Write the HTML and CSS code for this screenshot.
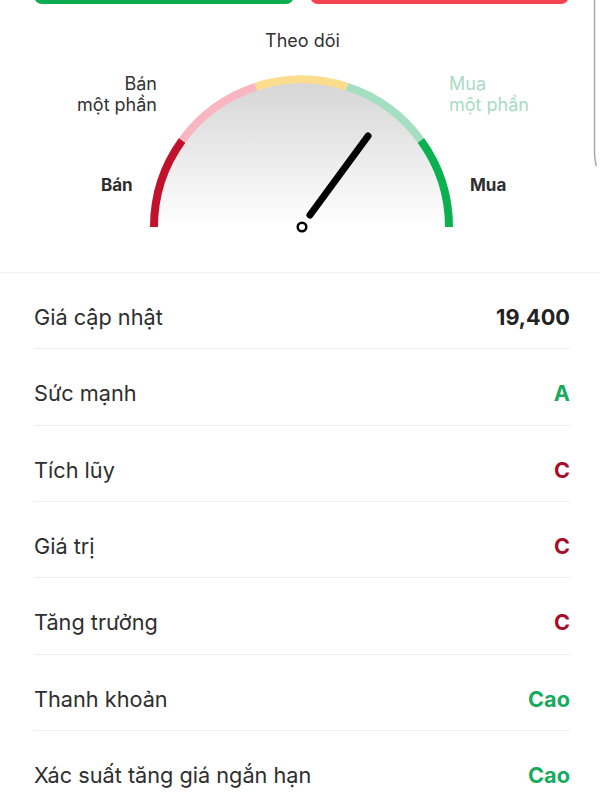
FILE: index.html
```html
<!DOCTYPE html>
<html lang="vi">
<head>
    <meta charset="UTF-8">
    <meta name="viewport" content="width=device-width, initial-scale=1.0">
    <title>Đánh giá cổ phiếu</title>
    <link rel="stylesheet" href="styles.css">
</head>
<body>

<div class="actions">
    <button class="btn btn-buy" aria-label="Mua"></button>
    <button class="btn btn-sell" aria-label="Bán"></button>
</div>

<div class="gauge">
    <svg class="gauge-svg" width="600" height="268" viewBox="0 4 600 268">
        <defs>
            <linearGradient id="face" x1="0" y1="0" x2="0" y2="1">
                <stop offset="0" stop-color="#d5d5d5"/>
                <stop offset="1" stop-color="#ffffff"/>
            </linearGradient>
        </defs>

        <!-- mặt đồng hồ -->
        <path d="M154 227 A147.5 147.5 0 0 1 449 227 Z" fill="url(#face)"/>

        <!-- 5 vùng đánh giá -->
        <path class="seg seg-sell" d="M154 227 A147.5 147.5 0 0 1 182.17 140.3"/>
        <path class="seg seg-part-sell" d="M182.17 140.3 A147.5 147.5 0 0 1 255.92 86.72"/>
        <path class="seg seg-hold" d="M255.92 86.72 A147.5 147.5 0 0 1 347.08 86.72"/>
        <path class="seg seg-part-buy" d="M347.08 86.72 A147.5 147.5 0 0 1 420.83 140.3"/>
        <path class="seg seg-buy" d="M420.83 140.3 A147.5 147.5 0 0 1 449 227"/>

        <!-- kim -->
        <line class="needle" x1="310" y1="215" x2="368" y2="136"/>
        <circle class="pivot" cx="302" cy="227" r="4.3"/>

        <text class="lbl" x="302.5" y="47" text-anchor="middle">Theo dõi</text>
        <text class="lbl" x="157" y="90" text-anchor="end">Bán</text>
        <text class="lbl" x="157" y="111" text-anchor="end">một phần</text>
        <text class="lbl lbl-light" x="449" y="90">Mua</text>
        <text class="lbl lbl-light" x="449" y="111">một phần</text>
        <text class="lbl lbl-strong" x="101" y="191">Bán</text>
        <text class="lbl lbl-strong" x="470" y="191">Mua</text>
    </svg>
</div>

<ul class="stats">
    <li class="row"><span class="name">Giá cập nhật</span><span class="val">19,400</span></li>
    <li class="row"><span class="name">Sức mạnh</span><span class="val good">A</span></li>
    <li class="row"><span class="name">Tích lũy</span><span class="val bad">C</span></li>
    <li class="row"><span class="name">Giá trị</span><span class="val bad">C</span></li>
    <li class="row"><span class="name">Tăng trưởng</span><span class="val bad">C</span></li>
    <li class="row"><span class="name">Thanh khoản</span><span class="val good">Cao</span></li>
    <li class="row"><span class="name">Xác suất tăng giá ngắn hạn</span><span class="val good">Cao</span></li>
</ul>

<!-- thanh cuộn bên phải -->
<svg class="scroll-edge" width="6" height="170" viewBox="0 0 6 170">
    <path d="M1.5 0 V150 Q1.5 160 3.5 166" fill="none" stroke="#a8a8a8" stroke-width="1.5"/>
</svg>

</body>
</html>
```

FILE: styles.css
```css
body {
    margin: 0;
    background-color: #ffffff;
    color: #2b2b2b;
    font-family: Inter, "Noto Sans", sans-serif;
    overflow: hidden;
}

.actions {
    display: flex;
    gap: 16px;
    padding: 0 31px 0 34px;
    margin-top: -40px;
}

.btn {
    flex: 1;
    height: 44px;
    border: none;
    border-radius: 8px;
}

.btn-buy {
    background-color: #0cad50; /* xanh */
}

.btn-sell {
    background-color: #f2434f; /* đỏ */
}

.gauge {
    border-bottom: 1px solid #f2f2f2;
}

.gauge-svg {
    display: block;
}

.seg {
    fill: none;
    stroke-width: 8;
}

.seg-sell { stroke: #c1112b; }
.seg-part-sell { stroke: #f7b6c0; }
.seg-hold { stroke: #fcdd8d; }
.seg-part-buy { stroke: #a5dfc1; }
.seg-buy { stroke: #0bb04f; }

.needle {
    stroke: #000000;
    stroke-width: 7;
    stroke-linecap: round;
}

.pivot {
    fill: #ffffff;
    stroke: #000000;
    stroke-width: 2.5;
}

.lbl {
    font-family: Inter, "Noto Sans", sans-serif;
    font-size: 18px;
    fill: #333333;
}

.lbl-light {
    fill: #a7dcc2;
}

.lbl-strong {
    font-size: 17px;
    font-weight: 700;
    fill: #2e2e2e;
}

.stats {
    list-style: none;
    margin: 0;
    padding: 0 30px 0 34px;
}

.row {
    display: flex;
    justify-content: space-between;
    align-items: center;
    padding: 32px 0 19.33px;
    line-height: 24px;
    font-size: 21.7px;
    border-bottom: 1px solid #efefef;
}

.name {
    color: #2e2e2e;
}

.val {
    font-weight: 700;
    color: #222222;
}

.val.good {
    color: #18ab5d;
}

.val.bad {
    color: #a70f2a;
}

.scroll-edge {
    position: absolute;
    top: 0;
    left: 593px;
}
```
